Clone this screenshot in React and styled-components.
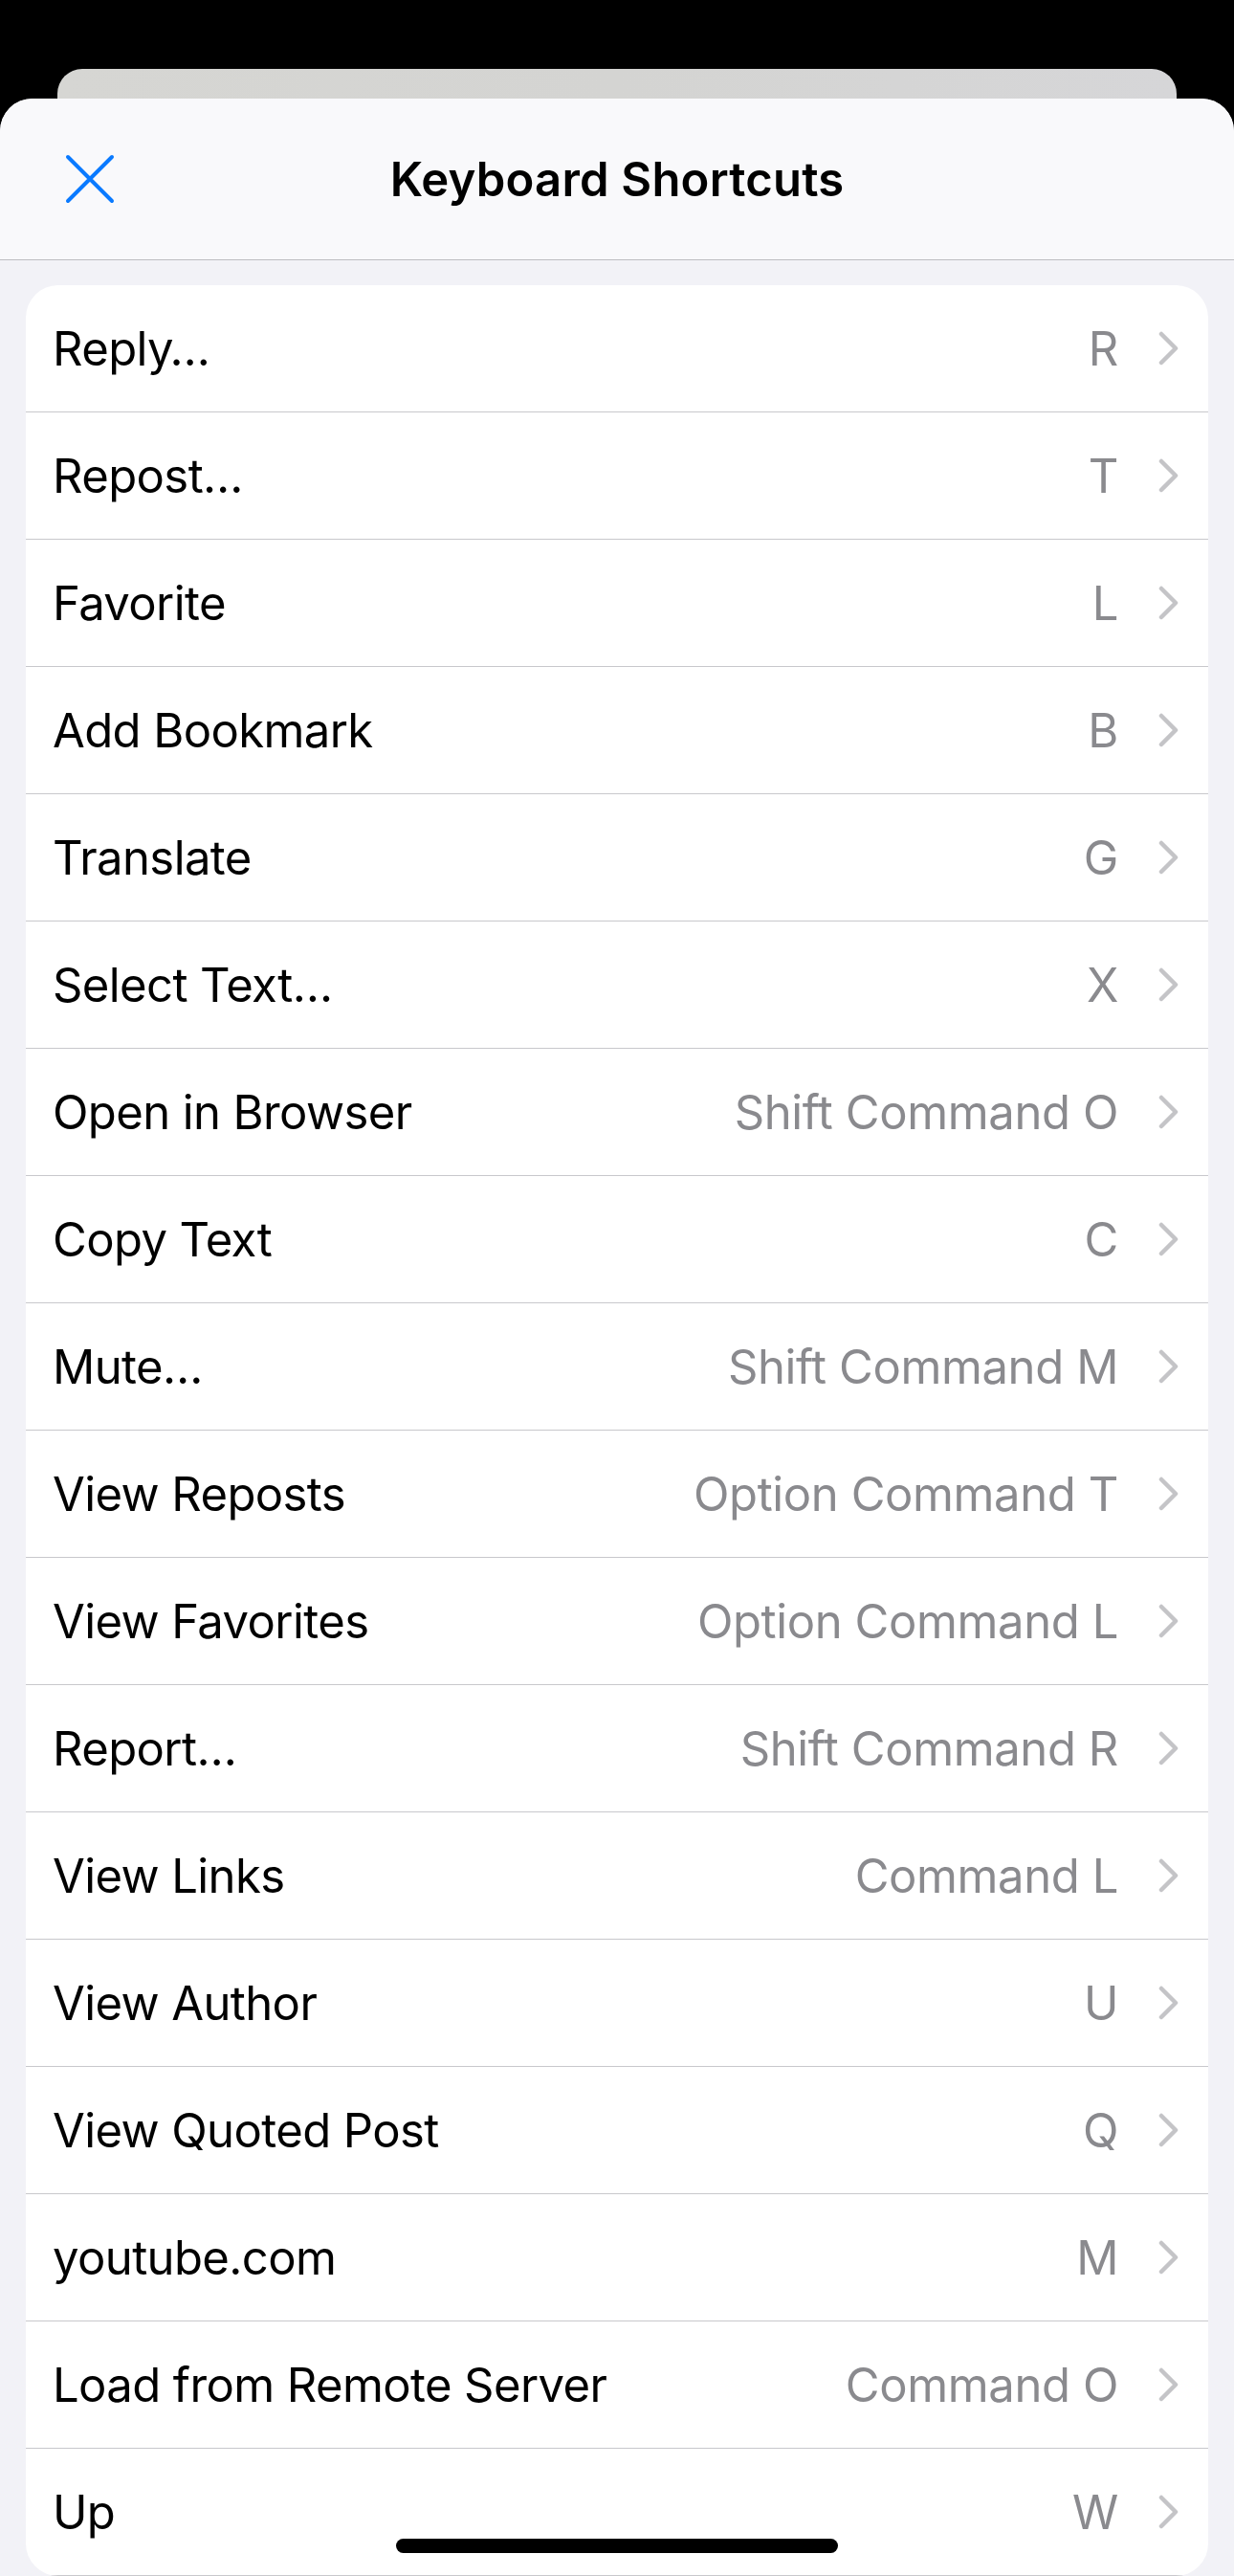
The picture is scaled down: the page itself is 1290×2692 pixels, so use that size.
import React from "react";
import styled, { createGlobalStyle } from "styled-components";

const shortcuts = [
  { title: "Reply…", keys: "R" },
  { title: "Repost…", keys: "T" },
  { title: "Favorite", keys: "L" },
  { title: "Add Bookmark", keys: "B" },
  { title: "Translate", keys: "G" },
  { title: "Select Text…", keys: "X" },
  { title: "Open in Browser", keys: "Shift Command O" },
  { title: "Copy Text", keys: "C" },
  { title: "Mute…", keys: "Shift Command M" },
  { title: "View Reposts", keys: "Option Command T" },
  { title: "View Favorites", keys: "Option Command L" },
  { title: "Report…", keys: "Shift Command R" },
  { title: "View Links", keys: "Command L" },
  { title: "View Author", keys: "U" },
  { title: "View Quoted Post", keys: "Q" },
  { title: "youtube.com", keys: "M" },
  { title: "Load from Remote Server", keys: "Command O" },
  { title: "Up", keys: "W" },
];

function CloseIcon() {
  return (
    <svg width="52" height="52" viewBox="0 0 52 52">
      <path
        d="M3 3 L49 49 M49 3 L3 49"
        stroke="#0a7aff"
        strokeWidth="4"
        strokeLinecap="round"
        fill="none"
      />
    </svg>
  );
}

function Chevron() {
  return (
    <svg width="22" height="36" viewBox="0 0 22 36">
      <path
        d="M3 3 L18 18 L3 33"
        stroke="#c4c4c7"
        strokeWidth="4.5"
        strokeLinecap="round"
        strokeLinejoin="round"
        fill="none"
      />
    </svg>
  );
}

export default function App() {
  return (
    <>
      <GlobalStyle />
      <Screen>
        <Backdrop>
          <BehindCard />
        </Backdrop>
        <Sheet>
          <Header>
            <CloseButton>
              <CloseIcon />
            </CloseButton>
            <Title>Keyboard Shortcuts</Title>
          </Header>
          <Content>
            <Card>
              {shortcuts.map((item) => (
                <Row key={item.title}>
                  <RowTitle>{item.title}</RowTitle>
                  <RowKeys>{item.keys}</RowKeys>
                  <Chevron />
                </Row>
              ))}
            </Card>
          </Content>
        </Sheet>
        <HomeIndicator />
      </Screen>
    </>
  );
}

const GlobalStyle = createGlobalStyle`
  body {
    margin: 0;
    background: #000000;
    font-family: Inter, "Noto Sans", "Liberation Sans", sans-serif;
    overflow: hidden;
  }
`;

const Screen = styled.div`
  position: relative;
  width: 1290px;
  height: 2692px;
  overflow: hidden;
  background: #000000;
  display: flex;
  flex-direction: column;
`;

const Backdrop = styled.div`
  height: 103px;
  padding: 72px 60px 0;
  box-sizing: border-box;
  display: flex;
`;

const BehindCard = styled.div`
  flex: 1;
  background: linear-gradient(90deg, #d6d6d3, #d4d4d2 50%, #d6d6d8);
  border-radius: 26px 26px 0 0;
`;

const Sheet = styled.div`
  flex: 1;
  background: #f2f2f7;
  border-radius: 34px 34px 0 0;
  overflow: hidden;
  display: flex;
  flex-direction: column;
`;

const Header = styled.div`
  position: relative;
  height: 168px;
  flex-shrink: 0;
  background: #f9f9fb;
  border-bottom: 1.5px solid #bdbdc1;
  display: flex;
  align-items: center;
  justify-content: center;
`;

const CloseButton = styled.div`
  position: absolute;
  left: 68px;
  top: 58px;
  width: 52px;
  height: 52px;
  display: flex;
`;

const Title = styled.h1`
  margin: 0;
  font-size: 49px;
  font-weight: 600;
  color: #000000;
  letter-spacing: 0.2px;
`;

const Content = styled.div`
  padding: 26px 27px 0;
`;

const Card = styled.div`
  background: #ffffff;
  border-radius: 34px;
  overflow: hidden;
`;

const Row = styled.div`
  height: 132px;
  display: flex;
  align-items: center;
  padding: 0 30px 0 28px;
  border-bottom: 1.5px solid #c8c8cc;
  gap: 28px;
`;

const RowTitle = styled.span`
  flex: 1;
  font-size: 49px;
  color: #000000;
  letter-spacing: -0.6px;
  white-space: nowrap;
`;

const RowKeys = styled.span`
  font-size: 49px;
  color: #8a8a8e;
  letter-spacing: -0.4px;
  white-space: nowrap;
  margin-right: 14px;
`;

const HomeIndicator = styled.div`
  position: absolute;
  left: 414px;
  bottom: 24px;
  width: 462px;
  height: 15px;
  border-radius: 8px;
  background: #000000;
`;
